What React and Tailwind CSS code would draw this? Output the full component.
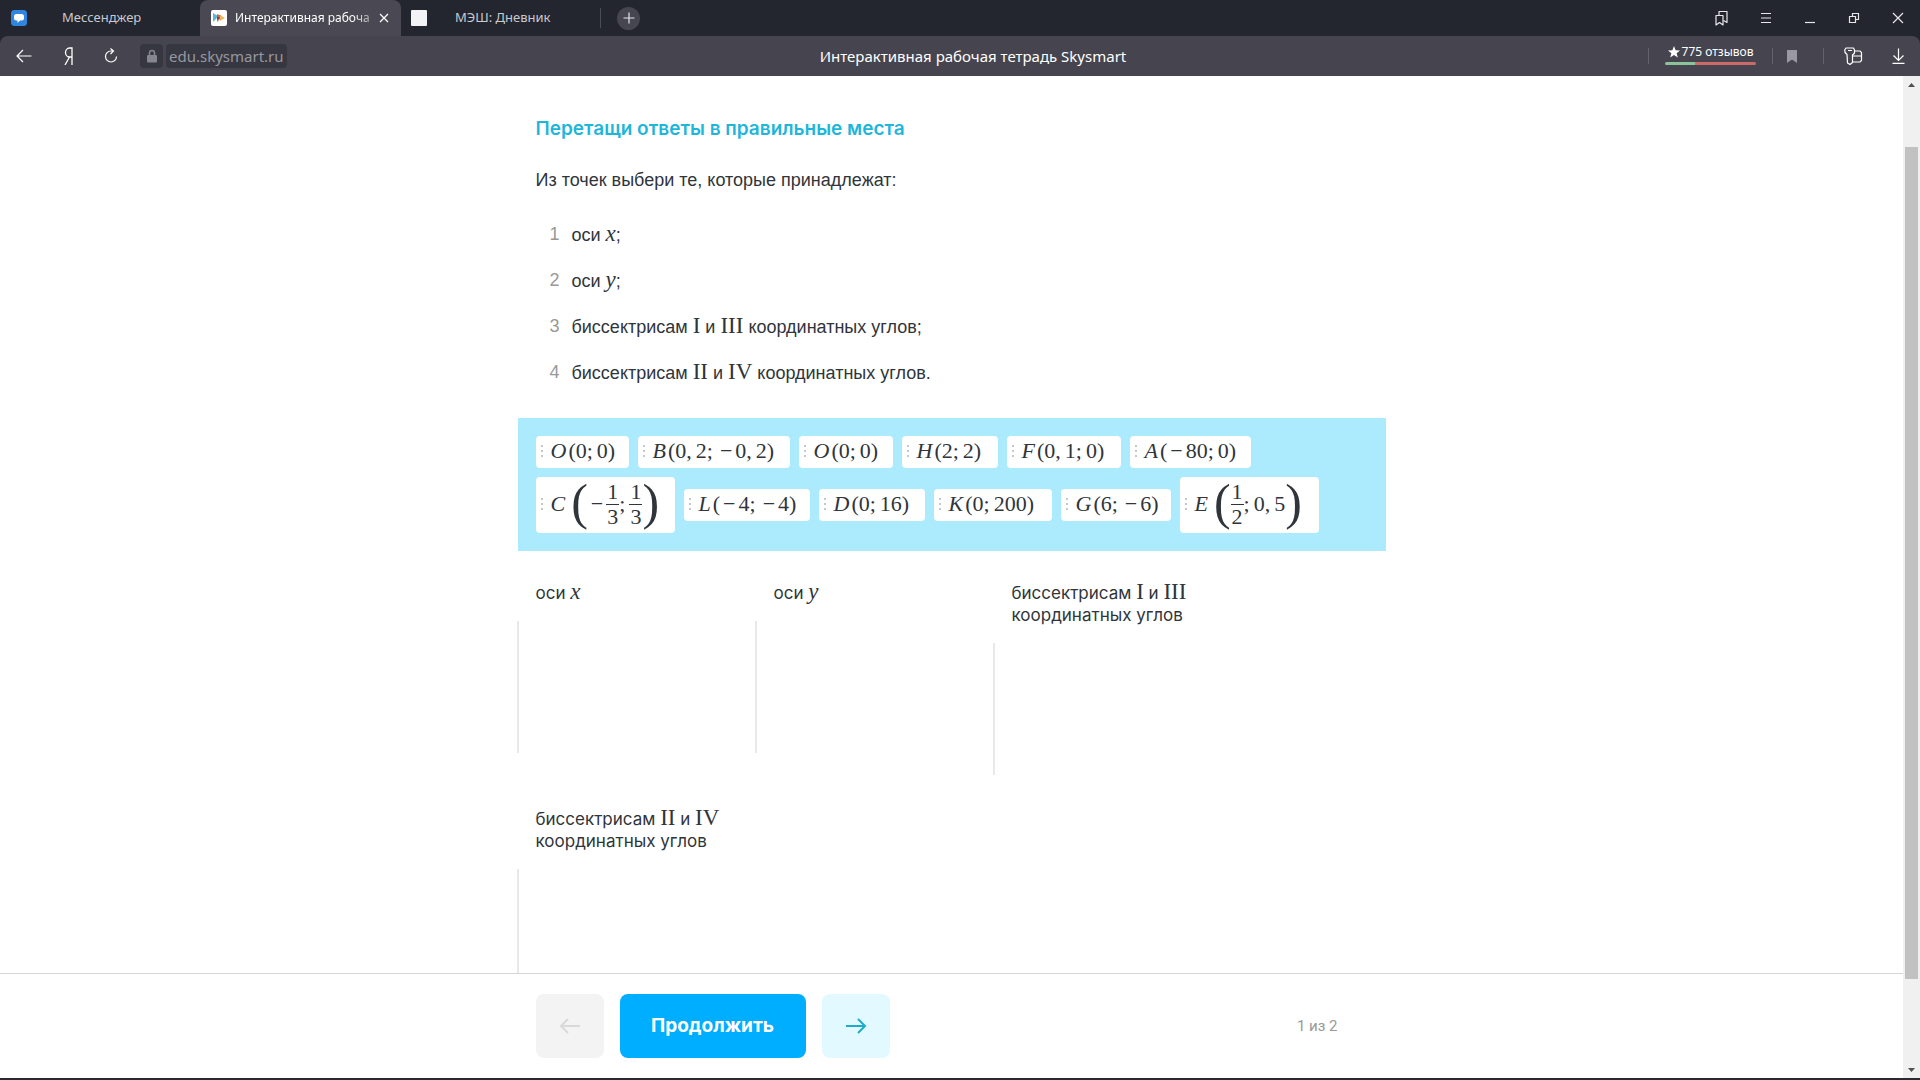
import React from "react";

const SANS = "font-['Liberation_Sans',Arial,sans-serif]";
const UI = "font-['Noto_Sans','Open_Sans',sans-serif]";
const ROUND = "font-['Inter',sans-serif]";

function Svg({ className = "", size = 16, sw = 1.2, children }) {
  return (
    <svg
      className={className}
      width={size}
      height={size}
      viewBox={`0 0 ${size} ${size}`}
      fill="none"
      stroke="currentColor"
      strokeWidth={sw}
      aria-hidden="true"
    >
      {children}
    </svg>
  );
}

function M({ children, italic }) {
  return (
    <span
      className={`font-['Liberation_Serif',serif] text-[23px] leading-none ${italic ? "italic" : ""}`}
    >
      {children}
    </span>
  );
}

const Minus = () => <span className="mx-[3px]">−</span>;
const Frac = ({ a, b }) => (
  <span className="flex flex-col items-center leading-6">
    <span className="border-b border-[#2f353a] px-px">{a}</span>
    <span>{b}</span>
  </span>
);
const Big = ({ children }) => (
  <span className="-mt-1 text-[50px] leading-none">{children}</span>
);

function Formula({ text }) {
  return text.split(/([;,−])/).map((part, i) => {
    if (part === "−") return <Minus key={i} />;
    if (part === ";" || part === ",")
      return (
        <span key={i} className="mr-1">
          {part}
        </span>
      );
    return <React.Fragment key={i}>{part}</React.Fragment>;
  });
}

const ANSWERS = [
  { name: "O", text: "(0;0)", w: "min-w-[93px]" },
  { name: "B", text: "(0,2;−0,2)", w: "min-w-[152px]" },
  { name: "O", text: "(0;0)", w: "min-w-[94px]" },
  { name: "H", text: "(2;2)", w: "min-w-[96px]" },
  { name: "F", text: "(0,1;0)", w: "min-w-[114px]" },
  { name: "A", text: "(−80;0)", w: "min-w-[121px]" },
  {
    name: "C",
    w: "min-w-[139px]",
    tall: (
      <>
        <Big>(</Big>
        <Minus />
        <Frac a="1" b="3" />
        <span className="mr-1">;</span>
        <Frac a="1" b="3" />
        <Big>)</Big>
      </>
    ),
  },
  { name: "L", text: "(−4;−4)", w: "min-w-[126px]" },
  { name: "D", text: "(0;16)", w: "min-w-[106px]" },
  { name: "K", text: "(0;200)", w: "min-w-[118px]" },
  { name: "G", text: "(6;−6)", w: "min-w-[110px]" },
  {
    name: "E",
    w: "min-w-[139px]",
    tall: (
      <>
        <Big>(</Big>
        <Frac a="1" b="2" />
        <Formula text=";0,5" />
        <Big>)</Big>
      </>
    ),
  },
];

function Chip({ name, text, tall, w }) {
  return (
    <button
      type="button"
      className={`flex items-center rounded bg-white pb-0.5 pl-[5px] font-['Liberation_Serif',serif] text-[22px] leading-none text-[#2f353a] ${w} ${tall ? "h-14" : "h-8"}`}
    >
      <span className="mr-2 flex flex-col gap-[3px]">
        <i className="size-0.5 bg-[#c4c8ca]" />
        <i className="size-0.5 bg-[#c4c8ca]" />
        <i className="size-0.5 bg-[#c4c8ca]" />
      </span>
      <span className={`italic ${tall ? "mr-1.5" : "mr-0.5"}`}>{name}</span>
      <span className="flex items-center">{tall || <Formula text={text} />}</span>
    </button>
  );
}

function DropColumn({ children }) {
  return (
    <section>
      <h2 className={`${ROUND} px-[19px] text-[17px] leading-[22px] text-[#2f353a]`}>{children}</h2>
      <div className="mt-[17px] h-[132px] border-l-2 border-[#e9e9e9]" />
    </section>
  );
}

function TabBar() {
  return (
    <div className={`${UI} flex h-9 items-stretch bg-[#23252f] text-[13px] text-[#c9cacf]`}>
      <button type="button" className="flex w-[200px] items-center pl-[11px]">
        <svg width="16" height="16" viewBox="0 0 16 16" aria-hidden="true">
          <rect width="16" height="16" rx="3.5" fill="#2f86e0" />
          <path d="M5.5 4h5a2.5 2.5 0 0 1 2.5 2.5v1.500a2.500 2.500 0 0 1-2.500 2.500H9L6.500 13v-2.500h-1A2.500 2.500 0 0 1 3 8V6.500A2.500 2.500 0 0 1 5.500 4z" fill="#fff" />
        </svg>
        <span className="ml-[35px]">Мессенджер</span>
      </button>
      <div className="flex w-[201px] items-center rounded-t-lg bg-[#4a4953] pl-[11px] text-white">
        <svg width="16" height="16" viewBox="0 0 16 16" className="shrink-0" aria-hidden="true">
          <rect width="16" height="16" rx="2" fill="#fff" />
          <path d="M2 3l5 3-2 3-3 3z" fill="#5fb5d8" />
          <path d="M6 4l5 2-2 3-3 3z" fill="#e0653f" />
          <path d="M9 5l5 3-5 3z" fill="#efb65c" />
          <path d="M6 6.500l3 1.500-3 1.500z" fill="#3d4d92" />
        </svg>
        <button
          type="button"
          className="ml-2 w-[138px] text-left text-[12px] whitespace-nowrap [mask-image:linear-gradient(to_right,#000_85%,#0006)]"
        >
          Интерактивная рабоча
        </button>
        <button type="button" aria-label="Закрыть вкладку" className="ml-1.5">
          <Svg size={10}><path d="M1 1l8 8M9 1L1 9" /></Svg>
        </button>
      </div>
      <button type="button" className="flex w-[199px] items-center pl-2.5">
        <span className="size-4 rounded-[1px] bg-[#f3f3f5]" />
        <span className="ml-7">МЭШ: Дневник</span>
      </button>
      <div className="h-5 w-px self-center bg-[#4b4c55]" />
      <button
        type="button"
        aria-label="Новая вкладка"
        className="ml-4 flex size-[23px] items-center justify-center self-center rounded-full bg-[#45464f] text-[#e5e5e8]"
      >
        <Svg size={12}><path d="M6 0.500v11M0.500 6h11" /></Svg>
      </button>
      <div className="mr-3.5 ml-auto flex items-center gap-7 text-[#e8e8ea]">
        <button type="button" aria-label="Закладки">
          <Svg size={16}>
            <path d="M2 5.500h7V15l-3.500-2.500L2 15z" strokeLinejoin="round" />
            <path d="M5 5.500v-4h8v11l-3.500-2" strokeLinejoin="round" />
          </Svg>
        </button>
        <button type="button" aria-label="Меню">
          <Svg size={16}><path d="M3 3.500h10M3 8h10M3 12.500h10" /></Svg>
        </button>
        <button type="button" aria-label="Свернуть">
          <Svg size={16}><path d="M3 12.500h10" /></Svg>
        </button>
        <button type="button" aria-label="Восстановить">
          <Svg size={16}><path d="M3.500 6.500h6v6h-6zM6.500 6.500v-3h6v6h-3" /></Svg>
        </button>
        <button type="button" aria-label="Закрыть">
          <Svg size={16}><path d="M3 3l10 10M13 3L3 13" /></Svg>
        </button>
      </div>
    </div>
  );
}

function Toolbar() {
  return (
    <div className="bg-[#23252f]">
      <div className={`${UI} grid h-10 grid-cols-[1fr_auto_1fr] items-center rounded-t-lg bg-[#46454f] text-white`}>
        <div className="flex items-center pl-4">
          <button type="button" aria-label="Назад">
            <Svg size={16}><path d="M15.500 8H1M7 2L1 8l6 6" /></Svg>
          </button>
          <button type="button" aria-label="Яндекс" className="ml-7">
            <Svg size={18} sw={1.3}><path d="M12 18V1H9.500a4 4.500 0 0 0 0 9H12M9.500 10L5 18" /></Svg>
          </button>
          <button type="button" aria-label="Обновить" className="ml-[25px]">
            <Svg size={16}><path d="M13.500 8.500a5.500 5.500 0 1 1-5.500-5.500h2M7.500 0.500l3 2.500-3 3" /></Svg>
          </button>
          <button type="button" aria-label="Защищённое соединение" className="ml-[21px] flex h-6 w-[23px] items-center justify-center rounded bg-[#363741] text-[#85868e]">
            <svg width="12" height="14" viewBox="0 0 12 14" aria-hidden="true">
              <rect x="1" y="6" width="10" height="7.500" rx="1" fill="currentColor" />
              <path d="M3.500 6V4a2.500 2.500 0 0 1 5 0v2" fill="none" stroke="currentColor" strokeWidth="1.500" />
            </svg>
          </button>
          <button type="button" className="ml-[3px] h-6 rounded bg-[#363741] px-[3px] text-[15px] leading-6 text-[#96979f]">
            edu.skysmart.ru
          </button>
        </div>
        <div className="pl-[26px] text-[15px] leading-5">Интерактивная рабочая тетрадь Skysmart</div>
        <div className="flex items-center justify-end pr-3.5">
          <div className="h-4 w-px bg-[#64636c]" />
          <a href="#reviews" className="mx-4 block pb-1 text-[12px] leading-4">
            <span className="flex items-center justify-center gap-0.5 whitespace-nowrap">
              <svg width="12" height="12" viewBox="0 0 12 12" fill="#fff" aria-hidden="true">
                <path d="M6 0l1.600 4.200 4.400.2-3.400 2.800L9.800 11.500 6 9l-3.800 2.500L3.400 7.200 0 4.400l4.400-.2z" />
              </svg>
              775 отзывов
            </span>
            <span className="mt-0.5 flex h-[3px] w-[91px] overflow-hidden rounded-sm">
              <i className="w-1/3 bg-[#8cc49a]" />
              <i className="flex-1 bg-[#cb6b68]" />
            </span>
          </a>
          <div className="h-4 w-px bg-[#64636c]" />
          <button type="button" aria-label="В закладки" className="mx-3.5 text-[#9a99a3]">
            <svg width="10" height="13" viewBox="0 0 10 13" fill="currentColor" aria-hidden="true"><path d="M0 0h10v13L5 9.500 0 13z" /></svg>
          </button>
          <div className="ml-3 h-4 w-px bg-[#64636c]" />
          <button type="button" aria-label="Пароли" className="ml-5">
            <Svg size={18} className="overflow-visible">
              <path d="M3 7.500C1 6 0.500 4.500 0.700 3L2 1h7.500l1 2v3L8.500 8v7.500L6 17.500 3.500 16z" strokeLinejoin="round" />
              <path d="M4 3.500h4M11 4h5l1.500 1.500v8L16 15H9M9 9h8.500" />
            </Svg>
          </button>
          <button type="button" aria-label="Загрузки" className="ml-7">
            <Svg size={16}><path d="M8.500 0.500v11.500M3.500 7.500l5 5 5-5M2.500 15.400h12" /></Svg>
          </button>
        </div>
      </div>
    </div>
  );
}

const CONDITIONS = [
  <>оси <M italic>x</M>;</>,
  <>оси <M italic>y</M>;</>,
  <>биссектрисам <M>I</M> и <M>III</M> координатных углов;</>,
  <>биссектрисам <M>II</M> и <M>IV</M> координатных углов.</>,
];

export default function App() {
  return (
    <div className="flex h-screen flex-col overflow-hidden bg-white">
      <TabBar />
      <Toolbar />
      <div className="flex min-h-0 flex-1">
        <div className="flex min-w-0 flex-1 flex-col">
          <main className="min-h-0 flex-1 overflow-hidden">
            <div className="mx-auto max-w-[870px] pt-10">
              <div className={`${SANS} px-[19px] text-[18px] leading-6 text-[#2f353a]`}>
                <h1 className={`${ROUND} text-[19px] leading-[26px] font-semibold text-[#1fb6dc]`}>
                  Перетащи ответы в правильные места
                </h1>
                <p className="mt-[26px]">Из точек выбери те, которые принадлежат:</p>
                <ol className="mt-[30px] flex flex-col gap-[22px]">
                  {CONDITIONS.map((c, i) => (
                    <li key={i} className="flex h-6 items-center">
                      <span className="w-6 text-right text-[#999]">{i + 1}</span>
                      <span className="ml-3">{c}</span>
                    </li>
                  ))}
                </ol>
              </div>
              <div className="mx-px mt-[34px] flex flex-wrap items-center gap-[9px] bg-[#abebfd] px-[18px] py-[18px]">
                {ANSWERS.map((a, i) => (
                  <Chip key={i} {...a} />
                ))}
              </div>
              <div className="mt-[29px] grid grid-cols-[repeat(3,238px)] items-start gap-y-[31px]">
                <DropColumn>оси <M italic>x</M></DropColumn>
                <DropColumn>оси <M italic>y</M></DropColumn>
                <DropColumn>биссектрисам <M>I</M> и <M>III</M> координатных углов</DropColumn>
                <DropColumn>биссектрисам <M>II</M> и <M>IV</M> координатных углов</DropColumn>
              </div>
            </div>
          </main>
          <footer className="border-t border-[#d6d6d6] bg-white py-5">
            <div className="mx-auto flex max-w-[870px] items-center gap-4 px-[19px]">
              <button type="button" disabled aria-label="Предыдущее задание" className="flex h-16 w-[68px] items-center justify-center rounded-lg bg-[#f3f3f3] text-[#d9d9d9]">
                <Svg size={22} sw={2}><path d="M21 11H2M9 4l-7 7 7 7" /></Svg>
              </button>
              <button type="button" className={`${ROUND} h-16 w-[186px] rounded-lg bg-[#00aeff] text-[19px] font-bold text-white`}>
                Продолжить
              </button>
              <button type="button" aria-label="Следующее задание" className="flex h-16 w-[68px] items-center justify-center rounded-lg bg-[#e2faff] text-[#1fabc9]">
                <Svg size={22} sw={2}><path d="M1 11h19M13 4l7 7-7 7" /></Svg>
              </button>
              <span className="mr-[30px] ml-auto font-['Roboto',sans-serif] text-[15px] leading-5 text-[#999]">1 из 2</span>
            </div>
          </footer>
        </div>
        <div className="flex w-[17px] flex-col items-center bg-[#f0f0f0] text-[#505050]">
          <svg width="9" height="17" viewBox="0 0 9 17" fill="currentColor" aria-hidden="true"><path d="M1 11l3.500-4L8 11z" /></svg>
          <div className="mt-[54px] h-[83%] w-[13px] bg-[#c1c1c1]" />
          <svg className="mt-auto" width="9" height="17" viewBox="0 0 9 17" fill="currentColor" aria-hidden="true"><path d="M1 7l3.500 4L8 7z" /></svg>
        </div>
      </div>
      <div className="h-0.5 bg-[#2b2a30]" />
    </div>
  );
}
